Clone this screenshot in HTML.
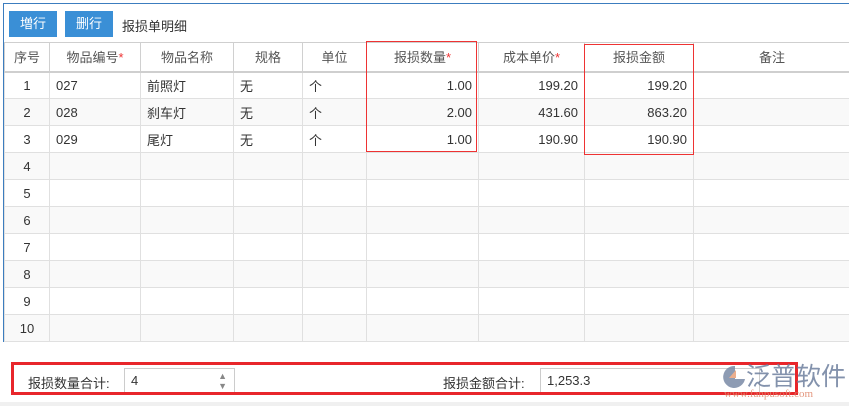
<!DOCTYPE html>
<html><head><meta charset="utf-8"><style>
*{box-sizing:border-box;margin:0;padding:0}
body{width:849px;height:406px;background:#fff;font-family:"Liberation Sans","Noto Sans CJK SC",sans-serif;font-size:13px;color:#333;position:relative;overflow:hidden}
.panel{position:absolute;left:3px;top:3px;width:850px;height:339px;border:1px solid #3c7dbf;border-right:none}
.btn{position:absolute;top:7px;height:26px;width:48px;background:#3a8fd6;color:#fff;text-align:center;line-height:26px;font-size:13px}
table{position:absolute;left:0;top:38px;border-collapse:collapse;table-layout:fixed}
td,th{border:1px solid #e0e0e0;height:27px;padding:0 6px;font-weight:normal;white-space:nowrap}
th{border-color:#d0d0d0;color:#555;text-align:center;height:29px;border-top:1px solid #cfcfcf;border-bottom:2px solid #cfcfcf}
tr:nth-child(odd) td{background:#f9f9f9}
.r{text-align:right}.c{text-align:center}
.s{color:#e33}
.red{position:absolute;border:1.5px solid #e33}
.bar{position:absolute;left:11px;top:362px;width:787px;height:33px;border:3px solid #e8262b}
.inp{position:absolute;height:25px;border:1px solid #ccc;background:#fff;font-size:13px;line-height:23px;padding-left:6px}
.lbl{position:absolute;top:373px;font-size:13px;color:#333}
</style></head><body>
<div class="panel">
<div class="btn" style="left:5px">増行</div>
<div class="btn" style="left:61px">删行</div>
<div style="position:absolute;left:118px;top:12px;font-size:13px">报损单明细</div>
<table>
<colgroup><col style="width:45px"><col style="width:91px"><col style="width:93px"><col style="width:69px"><col style="width:64px"><col style="width:112px"><col style="width:106px"><col style="width:109px"><col style="width:157px"></colgroup>
<tr><th>序号</th><th>物品编号<span class="s">*</span></th><th>物品名称</th><th>规格</th><th>单位</th><th>报损数量<span class="s">*</span></th><th>成本单价<span class="s">*</span></th><th>报损金额</th><th>备注</th></tr>
<tr><td class="c">1</td><td>027</td><td>前照灯</td><td>无</td><td>个</td><td class="r">1.00</td><td class="r">199.20</td><td class="r">199.20</td><td></td></tr>
<tr><td class="c">2</td><td>028</td><td>刹车灯</td><td>无</td><td>个</td><td class="r">2.00</td><td class="r">431.60</td><td class="r">863.20</td><td></td></tr>
<tr><td class="c">3</td><td>029</td><td>尾灯</td><td>无</td><td>个</td><td class="r">1.00</td><td class="r">190.90</td><td class="r">190.90</td><td></td></tr>
<tr><td class="c">4</td><td></td><td></td><td></td><td></td><td></td><td></td><td></td><td></td></tr>
<tr><td class="c">5</td><td></td><td></td><td></td><td></td><td></td><td></td><td></td><td></td></tr>
<tr><td class="c">6</td><td></td><td></td><td></td><td></td><td></td><td></td><td></td><td></td></tr>
<tr><td class="c">7</td><td></td><td></td><td></td><td></td><td></td><td></td><td></td><td></td></tr>
<tr><td class="c">8</td><td></td><td></td><td></td><td></td><td></td><td></td><td></td><td></td></tr>
<tr><td class="c">9</td><td></td><td></td><td></td><td></td><td></td><td></td><td></td><td></td></tr>
<tr><td class="c">10</td><td></td><td></td><td></td><td></td><td></td><td></td><td></td><td></td></tr>
</table>
</div>
<div class="red" style="left:366px;top:41px;width:111px;height:111px"></div>
<div class="red" style="left:584px;top:44px;width:110px;height:111px"></div>
<div class="lbl" style="left:28px">报损数量合计:</div>
<div class="inp" style="left:124px;top:368px;width:111px">4<span style="position:absolute;right:7px;top:2px;font-size:9px;line-height:10px;color:#888">▲<br>▼</span></div>
<div class="lbl" style="left:443px">报损金额合计:</div>
<div class="inp" style="left:540px;top:368px;width:220px">1,253.3</div>
<div class="bar"></div>
<div style="position:absolute;left:722px;top:360px;width:125px;height:42px;opacity:.85">
<svg width="24" height="26" style="position:absolute;left:0;top:4px" viewBox="0 0 24 26"><path d="M13 2 A11 11 0 1 0 23 15 L13 15 Z" fill="#7a8aa6"/><path d="M7 14 L14 6 L14 14Z" fill="#e8a07a"/></svg>
<div style="position:absolute;left:24px;top:-3px;font-size:25px;color:#6e7f9e;letter-spacing:0px;font-family:'Noto Sans CJK SC',sans-serif">泛普软件</div>
<div style="position:absolute;left:2px;top:28px;font-size:11px;color:#e0866a;font-family:'Liberation Serif',serif">www.fanpusoft.com</div>
</div>
<div style="position:absolute;left:0;top:402px;width:849px;height:4px;background:#f0f0f0"></div>
</body></html>
